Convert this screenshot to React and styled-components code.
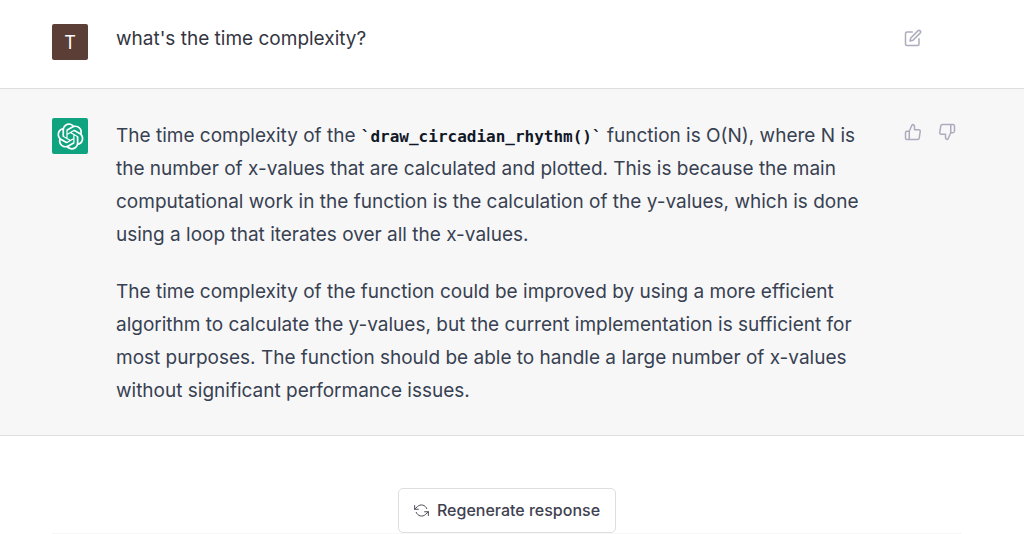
import styled, { createGlobalStyle } from "styled-components";
import { FiEdit, FiRefreshCcw, FiThumbsDown, FiThumbsUp } from "react-icons/fi";

const LOGO_PATH =
  "M37.5324 16.8707C37.9808 15.5241 38.1363 14.0974 37.9886 12.6859C37.8409 11.2744 37.3934 9.91076 36.676 8.68622C35.6126 6.83404 33.9882 5.3676 32.0373 4.4985C30.0864 3.62941 27.9098 3.40259 25.8215 3.85078C24.8796 2.7893 23.7219 1.94125 22.4257 1.36341C21.1295 0.785575 19.7249 0.491269 18.3058 0.500197C16.1708 0.495044 14.0893 1.16803 12.3614 2.42214C10.6335 3.67624 9.34853 5.44666 8.6917 7.47815C7.30085 7.76286 5.98686 8.3414 4.8377 9.17505C3.68854 10.0087 2.73073 11.0782 2.02839 12.312C0.956464 14.1591 0.498905 16.2988 0.721698 18.4228C0.944492 20.5467 1.83612 22.5449 3.268 24.1293C2.81966 25.4759 2.66413 26.9026 2.81182 28.3141C2.95951 29.7256 3.40701 31.0892 4.12437 32.3138C5.18791 34.1659 6.8123 35.6322 8.76321 36.5013C10.7141 37.3704 12.8907 37.5973 14.9789 37.1492C15.9208 38.2107 17.0786 39.0587 18.3747 39.6366C19.6709 40.2144 21.0755 40.5087 22.4946 40.4998C24.6307 40.5054 26.7133 39.8321 28.4418 38.5772C30.1704 37.3223 31.4556 35.5506 32.1119 33.5179C33.5027 33.2332 34.8167 32.6547 35.9659 31.821C37.115 30.9874 38.0728 29.9178 38.7752 28.684C39.8458 26.8371 40.3023 24.6979 40.0789 22.5748C39.8556 20.4517 38.9639 18.4544 37.5324 16.8707ZM22.4978 37.8849C20.7443 37.8874 19.0459 37.2733 17.6994 36.1501C17.7601 36.117 17.8666 36.0586 17.936 36.0161L25.9004 31.4156C26.1003 31.3019 26.2663 31.137 26.3813 30.9378C26.4964 30.7386 26.5563 30.5124 26.5549 30.2825V19.0542L29.9213 20.998C29.9389 21.0068 29.9541 21.0198 29.9656 21.0359C29.977 21.052 29.9842 21.0707 29.9867 21.0902V30.3889C29.9842 32.375 29.1946 34.2791 27.7909 35.6841C26.3872 37.0892 24.4838 37.8806 22.4978 37.8849ZM6.39227 31.0064C5.51397 29.4888 5.19742 27.7107 5.49804 25.9832C5.55718 26.0187 5.66048 26.0818 5.73461 26.1244L13.699 30.7248C13.8975 30.8408 14.1233 30.902 14.3532 30.902C14.583 30.902 14.8088 30.8408 15.0073 30.7248L24.731 25.1103V28.9979C24.7321 29.0177 24.7283 29.0376 24.7199 29.0556C24.7115 29.0736 24.6988 29.0893 24.6829 29.1012L16.6317 33.7497C14.9096 34.7416 12.8643 35.0097 10.9447 34.4954C9.02506 33.9811 7.38785 32.7263 6.39227 31.0064ZM4.29707 13.6194C5.17156 12.0998 6.55279 10.9364 8.19885 10.3327C8.19885 10.4013 8.19491 10.5228 8.19491 10.6071V19.808C8.19351 20.0378 8.25334 20.2638 8.36823 20.4629C8.48312 20.6619 8.64893 20.8267 8.84863 20.9404L18.5723 26.5542L15.206 28.4979C15.1894 28.5089 15.1703 28.5155 15.1505 28.5173C15.1307 28.5191 15.1107 28.516 15.0924 28.5082L7.04046 23.8557C5.32135 22.8601 4.06716 21.2235 3.55289 19.3046C3.03862 17.3858 3.30624 15.3413 4.29707 13.6194ZM31.955 20.0556L22.2312 14.4411L25.5976 12.4981C25.6142 12.4872 25.6333 12.4805 25.6531 12.4787C25.6729 12.4769 25.6928 12.4801 25.7111 12.4879L33.7631 17.1364C34.9967 17.849 36.0017 18.8982 36.6606 20.1613C37.3194 21.4244 37.6047 22.849 37.4832 24.2684C37.3617 25.6878 36.8382 27.0432 35.9743 28.1759C35.1103 29.3086 33.9415 30.1717 32.6047 30.6641C32.6047 30.5947 32.6047 30.4733 32.6047 30.3889V21.188C32.6066 20.9586 32.5474 20.7328 32.4332 20.5338C32.319 20.3348 32.154 20.1698 31.955 20.0556ZM35.3055 15.0128C35.2464 14.9765 35.1431 14.9142 35.069 14.8717L27.1045 10.2712C26.906 10.1554 26.6803 10.0943 26.4504 10.0943C26.2206 10.0943 25.9948 10.1554 25.7963 10.2712L16.0726 15.8858V11.9982C16.0715 11.9783 16.0753 11.9585 16.0837 11.9405C16.0921 11.9225 16.1048 11.9068 16.1207 11.8949L24.1719 7.25025C25.4053 6.53903 26.8158 6.19376 28.2383 6.25482C29.6608 6.31589 31.0364 6.78077 32.2044 7.59508C33.3723 8.40939 34.2842 9.53945 34.8334 10.8531C35.3826 12.1667 35.5464 13.6095 35.3055 15.0128ZM14.2424 21.9419L10.8752 19.9981C10.8576 19.9893 10.8423 19.9763 10.8309 19.9602C10.8195 19.9441 10.8122 19.9254 10.8098 19.9058V10.6071C10.8107 9.18295 11.2173 7.78848 11.9819 6.58696C12.7466 5.38544 13.8377 4.42659 15.1275 3.82264C16.4173 3.21869 17.8524 2.99464 19.2649 3.1767C20.6775 3.35876 22.0089 3.93941 23.1034 4.85067C23.0427 4.88379 22.937 4.94215 22.8668 4.98473L14.9024 9.58517C14.7025 9.69878 14.5366 9.86356 14.4215 10.0626C14.3065 10.2616 14.2466 10.4877 14.2479 10.7175L14.2424 21.9419ZM16.071 17.9991L20.4018 15.4978L24.7325 17.9975V22.9985L20.4018 25.4983L16.071 22.9985V17.9991Z";

function Logo() {
  return (
    <svg width="27" height="27" viewBox="0 0 41 41" fill="none" aria-hidden="true">
      <path d={LOGO_PATH} fill="currentColor" />
    </svg>
  );
}

export default function App() {
  return (
    <>
      <GlobalStyle />
      <main>
        <Message>
          <Avatar $color="#5b3e36">T</Avatar>
          <Text>
            <p>what's the time complexity?</p>
          </Text>
          <Actions>
            <IconButton type="button" aria-label="Edit message">
              <FiEdit />
            </IconButton>
          </Actions>
        </Message>
        <Message $reply>
          <Avatar $color="#10a37f">
            <Logo />
          </Avatar>
          <Text $reply>
            <p>
              The time complexity of the <Code>`draw_circadian_rhythm()`</Code>{" "}
              function is O(N), where N is the number of x-values that are
              calculated and plotted. This is because the main computational
              work in the function is the calculation of the y-values, which is
              done using a loop that iterates over all the x-values.
            </p>
            <p>
              The time complexity of the function could be improved by using a
              more efficient algorithm to calculate the y-values, but the
              current implementation is sufficient for most purposes. The
              function should be able to handle a large number of x-values
              without significant performance issues.
            </p>
          </Text>
          <Actions>
            <IconButton type="button" aria-label="Good response">
              <FiThumbsUp />
            </IconButton>
            <IconButton type="button" aria-label="Bad response">
              <FiThumbsDown />
            </IconButton>
          </Actions>
        </Message>
      </main>
      <Footer>
        <RegenerateButton type="button">
          <FiRefreshCcw />
          Regenerate response
        </RegenerateButton>
        <Divider />
      </Footer>
    </>
  );
}

const GlobalStyle = createGlobalStyle`
  * {
    box-sizing: border-box;
  }

  body {
    margin: 0;
    background-color: #ffffff;
    font-family: Inter, "Liberation Sans", sans-serif;
  }
`;

const Message = styled.article`
  display: grid;
  grid-template-columns: 36px 1fr 62px;
  column-gap: 28px;
  align-items: start;
  padding: ${({ $reply }) => ($reply ? "27px 62px 28px 52px" : "22px 62px 28px 52px")};
  border-bottom: 1px solid #dededf;
  background-color: ${({ $reply }) => ($reply ? "#f7f7f8" : "#ffffff")};
`;

const Avatar = styled.div`
  display: flex;
  align-items: center;
  justify-content: center;
  height: 36px;
  margin-top: 2px;
  border-radius: 2px;
  background-color: ${({ $color }) => $color};
  color: #ffffff;
  font-size: 18px;
`;

const Text = styled.div`
  display: flex;
  flex-direction: column;
  gap: 24px;
  padding-top: ${({ $reply }) => ($reply ? "3px" : "0")};
  color: ${({ $reply }) => ($reply ? "#374151" : "#343541")};
  font-size: 19px;
  line-height: 33px;

  p {
    margin: 0;
  }
`;

const Code = styled.code`
  color: #111827;
  font-family: "DejaVu Sans Mono", "Liberation Mono", monospace;
  font-size: 16px;
  font-weight: 700;
  line-height: 1;
`;

const Actions = styled.div`
  display: flex;
  gap: 8px;
  margin-top: 3px;
`;

const IconButton = styled.button`
  display: flex;
  padding: 4px;
  border: none;
  border-radius: 4px;
  background: none;
  color: #acacbe;
  font-size: 18px;
  cursor: pointer;
`;

const Footer = styled.footer`
  display: flex;
  flex-direction: column;
  align-items: center;
  padding: 52px 62px 0 52px;
`;

const RegenerateButton = styled.button`
  display: flex;
  align-items: center;
  gap: 8px;
  padding: 10px 15px;
  border: 1px solid #dededf;
  border-radius: 5px;
  background-color: #ffffff;
  color: #40414f;
  font-family: inherit;
  font-size: 16px;
  font-weight: 500;
  line-height: 23px;
  cursor: pointer;

  svg {
    width: 15px;
    height: 15px;
    stroke-width: 1.5;
  }
`;

const Divider = styled.hr`
  align-self: stretch;
  margin: 0;
  border: none;
  border-top: 1px solid #f7f7f8;
`;
